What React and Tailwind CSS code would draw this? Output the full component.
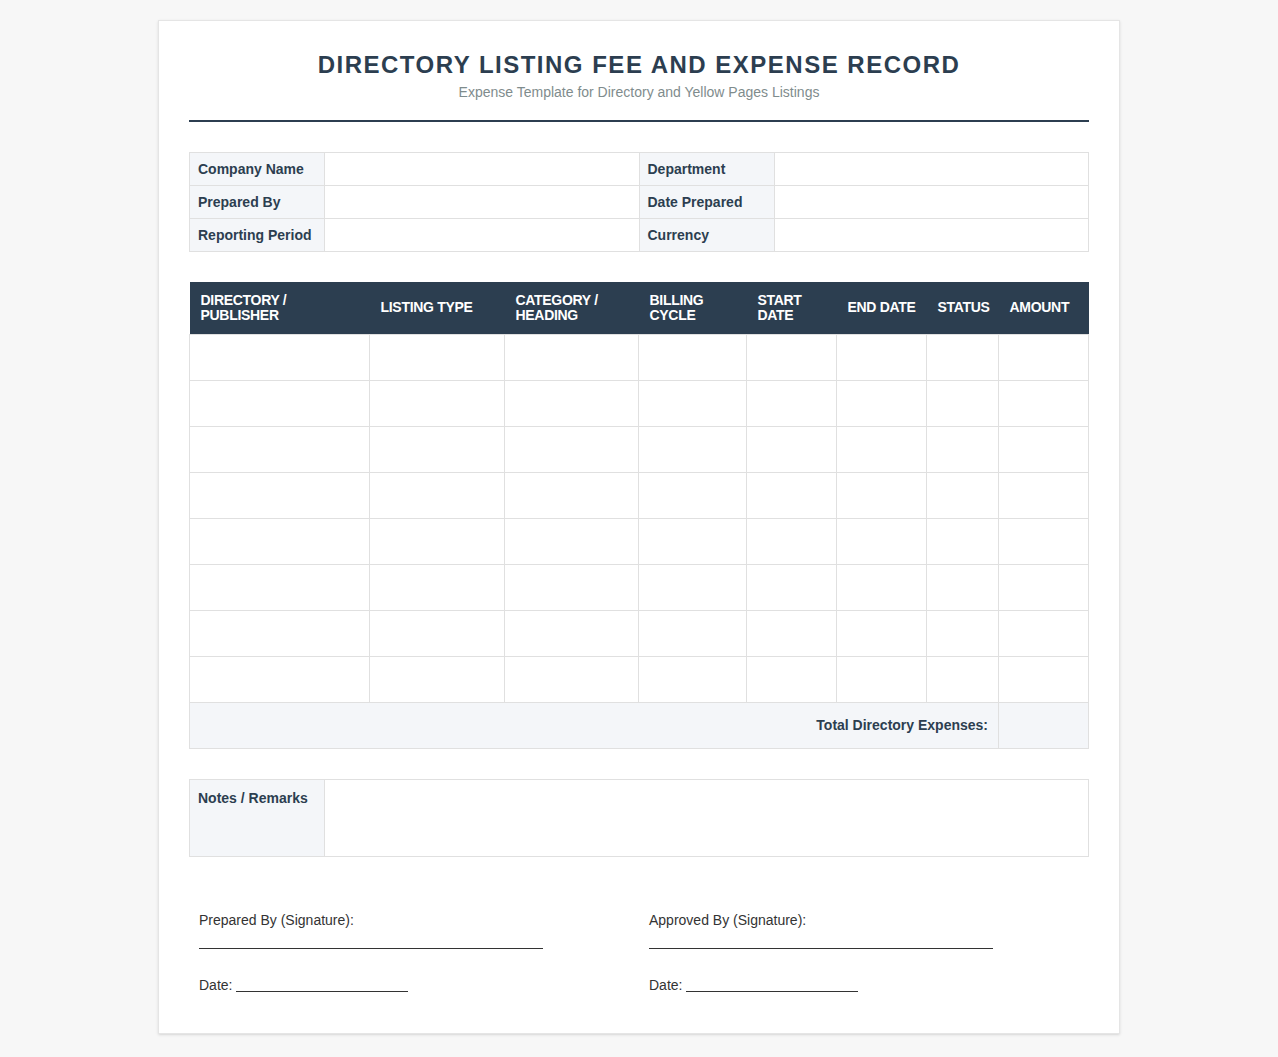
export default function App() {
  const cols = [
    ["DIRECTORY /", "PUBLISHER", "w-[180px]"],
    ["LISTING TYPE", null, "w-[135px]"],
    ["CATEGORY /", "HEADING", "w-[134px]"],
    ["BILLING", "CYCLE", "w-[108px]"],
    ["START", "DATE", "w-[90px]"],
    ["END DATE", null, "w-[90px]"],
    ["STATUS", null, "w-[72px]"],
    ["AMOUNT", null, "w-[90px]"],
  ];
  const info = [
    ["Company Name", "Department"],
    ["Prepared By", "Date Prepared"],
    ["Reporting Period", "Currency"],
  ];
  return (
    <div className="min-h-screen bg-[#f7f7f7] pt-5 pb-5 font-[Liberation_Sans,Arial,sans-serif] text-[#333]">
      <div className="mx-auto w-[962px] bg-white border border-[#e5e5e5] shadow-sm px-[30px] pt-[30px] pb-[40px]">
        <div className="text-center border-b-2 border-[#2c3e50] pb-[20px]">
          <h1 className="text-[24px] font-bold tracking-[1.5px] text-[#2c3e50] leading-[28px]">
            DIRECTORY LISTING FEE AND EXPENSE RECORD
          </h1>
          <p className="text-[14px] text-[#7f8c8d] mt-[5px] leading-[16px]">
            Expense Template for Directory and Yellow Pages Listings
          </p>
        </div>

        <table className="w-full mt-[30px] border-collapse text-[14px]">
          <tbody>
            {info.map(([a, b]) => (
              <tr key={a} className="h-[33px]">
                <td className="w-[135px] whitespace-nowrap border border-[#e0e0e0] bg-[#f4f6f9] px-2 font-bold text-[#2c3e50]">{a}</td>
                <td className="border border-[#e0e0e0]"></td>
                <td className="w-[135px] whitespace-nowrap border border-[#e0e0e0] bg-[#f4f6f9] px-2 font-bold text-[#2c3e50]">{b}</td>
                <td className="border border-[#e0e0e0]"></td>
              </tr>
            ))}
          </tbody>
        </table>

        <table className="w-full mt-[30px] border-collapse text-[14px] table-fixed">
          <thead>
            <tr className="h-[52px] bg-[#2c3e50] text-white">
              {cols.map(([a, b, w]) => (
                <th key={a} className={`${w} text-left font-bold px-[11px] leading-[15px] tracking-[-0.3px] whitespace-nowrap`}>
                  {a}
                  {b && <br />}
                  {b}
                </th>
              ))}
            </tr>
          </thead>
          <tbody>
            {Array.from({ length: 8 }).map((_, i) => (
              <tr key={i} className="h-[46px]">
                {cols.map(([a]) => (
                  <td key={a} className="border border-[#e0e0e0]"></td>
                ))}
              </tr>
            ))}
            <tr className="h-[46px] bg-[#f4f6f9]">
              <td colSpan={7} className="border border-[#e0e0e0] text-right px-[10px] font-bold text-[#2c3e50] text-[14px]">
                Total Directory Expenses:
              </td>
              <td className="border border-[#e0e0e0]"></td>
            </tr>
          </tbody>
        </table>

        <table className="w-full mt-[30px] border-collapse text-[14px]">
          <tbody>
            <tr className="h-[77px]">
              <td className="w-[135px] align-top whitespace-nowrap border border-[#e0e0e0] bg-[#f4f6f9] px-2 pt-[8px] font-bold text-[#2c3e50]">
                Notes / Remarks
              </td>
              <td className="border border-[#e0e0e0]"></td>
            </tr>
          </tbody>
        </table>

        <div className="mt-[55px] px-[10px] grid grid-cols-[450px_1fr] text-[14px] text-[#333]">
          {["Prepared By (Signature):", "Approved By (Signature):"].map((t) => (
            <div key={t}>
              <div className="leading-[16px]">{t}</div>
              <div className="mt-[20px] w-[344px] border-b border-[#333]"></div>
              <div className="mt-[28px] flex items-end leading-[16px]">
                Date:
                <span className="ml-[4px] w-[172px] border-b border-[#333] mb-[1px]"></span>
              </div>
            </div>
          ))}
        </div>
      </div>
    </div>
  );
}
